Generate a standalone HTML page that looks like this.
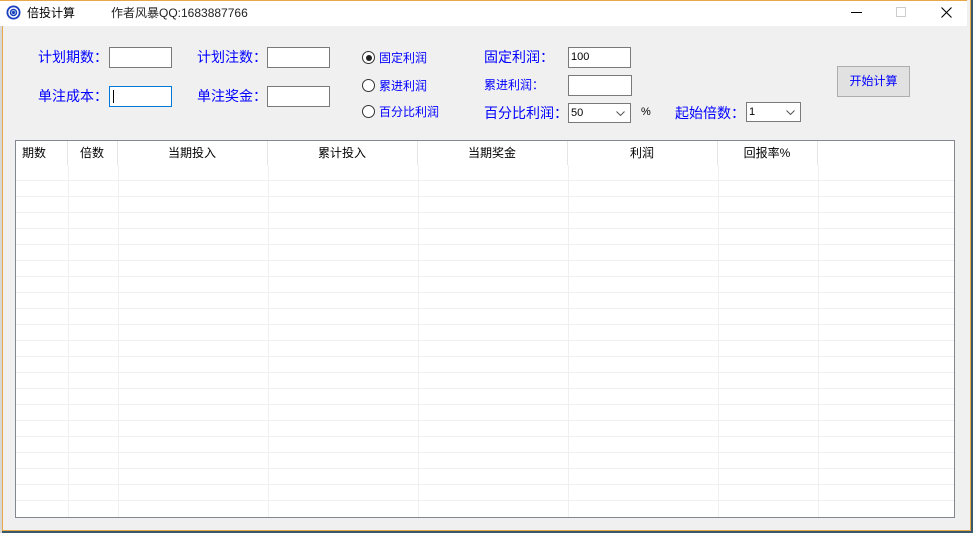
<!DOCTYPE html>
<html><head><meta charset="utf-8"><style>
*{margin:0;padding:0;box-sizing:border-box}
html,body{width:973px;height:533px;overflow:hidden;background:#3a5a6a}
body{position:relative;font-family:"Liberation Sans","Microsoft YaHei","Noto Sans CJK SC",sans-serif}
.a{position:absolute;white-space:nowrap}
#win{position:absolute;left:2px;top:0;width:969px;height:531px;background:#f0f0f0;border:1px solid #e8a84a;border-top:none}
#title{position:absolute;left:0;top:0;width:967px;height:26px;background:#fff;border-top:1px solid #e8a84a}
.lbl{color:#0000ff;font-size:14px;line-height:16px}
.sl{color:#0000ff;font-size:12px;line-height:14px}
.in{position:absolute;background:#fff;border:1px solid #7a7a7a}
.cb{position:absolute;background:#fff;border:1px solid #7a7a7a;font-size:11px;line-height:18px;padding-left:2px}
.cb svg{position:absolute;right:5px;top:7px}
.rad{position:absolute;width:13px;height:13px;border:1px solid #333;border-radius:50%;background:#fff}
.hd{position:absolute;top:146px;font-size:12px;color:#000;line-height:14px;text-align:center}
</style></head><body>
<div style="position:absolute;left:0;top:0;width:2px;height:533px;background:#d8d8d8"></div>
<div id="win"></div>
<div id="title"></div>
<svg class="a" style="left:6px;top:5px" width="15" height="15" viewBox="0 0 15 15"><circle cx="7.5" cy="7.5" r="7" fill="#1a3fc0"/><circle cx="7.5" cy="7.5" r="4.5" fill="none" stroke="#fff" stroke-width="1.5"/><circle cx="7.5" cy="7.5" r="2" fill="#1a3fc0" stroke="#9bd" stroke-width="1"/></svg>
<div class="a" style="left:27px;top:5px;font-size:12px;line-height:16px;color:#000">倍投计算</div>
<div class="a" style="left:111px;top:5px;font-size:12px;line-height:16px;color:#222">作者风暴QQ:1683887766</div>
<div class="a" style="left:851px;top:12px;width:11px;height:1px;background:#000"></div>
<div class="a" style="left:896px;top:7px;width:10px;height:10px;border:1px solid #ccc"></div>
<svg class="a" style="left:941px;top:7px" width="11" height="11"><path d="M0.5 0.5L10.5 10.5M10.5 0.5L0.5 10.5" stroke="#000" stroke-width="1.1"/></svg>

<div class="a lbl" style="left:38px;top:49px">计划期数：</div>
<div class="in" style="left:109px;top:47px;width:63px;height:21px"></div>
<div class="a lbl" style="left:197px;top:49px">计划注数：</div>
<div class="in" style="left:267px;top:47px;width:63px;height:21px"></div>
<div class="a lbl" style="left:38px;top:88px">单注成本：</div>
<div class="in" style="left:109px;top:86px;width:63px;height:21px;border-color:#0078d7"><div style="position:absolute;left:3px;top:3px;width:1px;height:13px;background:#000"></div></div>
<div class="a lbl" style="left:197px;top:88px">单注奖金：</div>
<div class="in" style="left:267px;top:86px;width:63px;height:21px"></div>

<div class="rad" style="left:362px;top:51px"><div style="position:absolute;left:2.5px;top:2.5px;width:6px;height:6px;border-radius:50%;background:#222"></div></div>
<div class="a sl" style="left:379px;top:51px">固定利润</div>
<div class="rad" style="left:362px;top:79px"></div>
<div class="a sl" style="left:379px;top:79px">累进利润</div>
<div class="rad" style="left:362px;top:105px"></div>
<div class="a sl" style="left:379px;top:105px">百分比利润</div>

<div class="a lbl" style="left:484px;top:49px">固定利润：</div>
<div class="in" style="left:568px;top:47px;width:63px;height:21px;font-size:11px;line-height:18px;padding-left:2px">100</div>
<div class="a sl" style="left:484px;top:78px">累进利润：</div>
<div class="in" style="left:568px;top:75px;width:64px;height:21px"></div>
<div class="a lbl" style="left:484px;top:105px">百分比利润：</div>
<div class="cb" style="left:568px;top:103px;width:63px;height:20px">50<svg width="9" height="5"><path d="M0.5 0.5L4.5 4.5L8.5 0.5" fill="none" stroke="#555"/></svg></div>
<div class="a" style="left:641px;top:106px;font-size:11px">%</div>
<div class="a lbl" style="left:675px;top:105px">起始倍数：</div>
<div class="cb" style="left:746px;top:102px;width:55px;height:20px">1<svg width="9" height="5"><path d="M0.5 0.5L4.5 4.5L8.5 0.5" fill="none" stroke="#555"/></svg></div>

<div class="a" style="left:837px;top:66px;width:73px;height:31px;background:#e1e1e1;border:1px solid #adadad;color:#0000ff;font-size:12px;line-height:29px;text-align:center">开始计算</div>

<div class="a" style="left:15px;top:140px;width:940px;height:378px;background:#fff;border:1px solid #828790"></div>
<svg class="a" style="left:16px;top:141px" width="938" height="376">
<g stroke="#e5e5e5" stroke-width="1">
<line x1="51.5" y1="0" x2="51.5" y2="24"/><line x1="101.5" y1="0" x2="101.5" y2="24"/><line x1="251.5" y1="0" x2="251.5" y2="24"/><line x1="401.5" y1="0" x2="401.5" y2="24"/><line x1="551.5" y1="0" x2="551.5" y2="24"/><line x1="701.5" y1="0" x2="701.5" y2="24"/><line x1="801.5" y1="0" x2="801.5" y2="24"/>
</g>
<g stroke="#f0f0f0" stroke-width="1">
<line x1="52.5" y1="24" x2="52.5" y2="376"/><line x1="102.5" y1="24" x2="102.5" y2="376"/><line x1="252.5" y1="24" x2="252.5" y2="376"/><line x1="402.5" y1="24" x2="402.5" y2="376"/><line x1="552.5" y1="24" x2="552.5" y2="376"/><line x1="702.5" y1="24" x2="702.5" y2="376"/><line x1="802.5" y1="24" x2="802.5" y2="376"/>
<line x1="0" y1="39.5" x2="938" y2="39.5"/><line x1="0" y1="55.5" x2="938" y2="55.5"/><line x1="0" y1="71.5" x2="938" y2="71.5"/><line x1="0" y1="87.5" x2="938" y2="87.5"/><line x1="0" y1="103.5" x2="938" y2="103.5"/><line x1="0" y1="119.5" x2="938" y2="119.5"/><line x1="0" y1="135.5" x2="938" y2="135.5"/><line x1="0" y1="151.5" x2="938" y2="151.5"/><line x1="0" y1="167.5" x2="938" y2="167.5"/><line x1="0" y1="183.5" x2="938" y2="183.5"/><line x1="0" y1="199.5" x2="938" y2="199.5"/><line x1="0" y1="215.5" x2="938" y2="215.5"/><line x1="0" y1="231.5" x2="938" y2="231.5"/><line x1="0" y1="247.5" x2="938" y2="247.5"/><line x1="0" y1="263.5" x2="938" y2="263.5"/><line x1="0" y1="279.5" x2="938" y2="279.5"/><line x1="0" y1="295.5" x2="938" y2="295.5"/><line x1="0" y1="311.5" x2="938" y2="311.5"/><line x1="0" y1="327.5" x2="938" y2="327.5"/><line x1="0" y1="343.5" x2="938" y2="343.5"/><line x1="0" y1="359.5" x2="938" y2="359.5"/>
</g></svg>
<div class="hd" style="left:22px">期数</div>
<div class="hd" style="left:67px;width:50px">倍数</div>
<div class="hd" style="left:117px;width:150px">当期投入</div>
<div class="hd" style="left:267px;width:150px">累计投入</div>
<div class="hd" style="left:417px;width:150px">当期奖金</div>
<div class="hd" style="left:567px;width:150px">利润</div>
<div class="hd" style="left:717px;width:100px">回报率%</div>
</body></html>
